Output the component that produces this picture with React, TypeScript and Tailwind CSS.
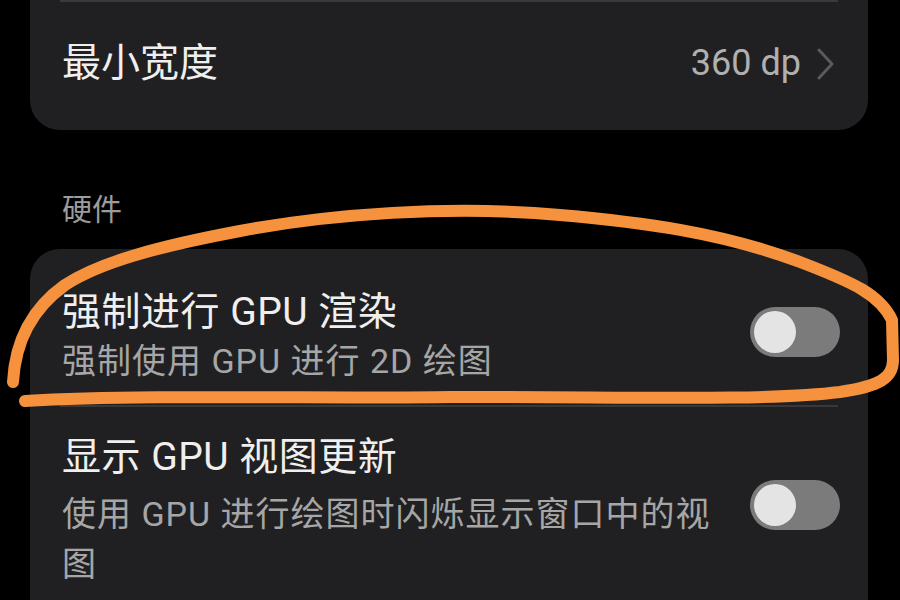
import React from "react";

const FONT = 'Roboto, "Noto Sans CJK SC", "Noto Sans", sans-serif';

function Toggle({ className = "" }: { className?: string }) {
  return (
    <div className={`w-[90px] h-[50px] rounded-full bg-[#7b7b7b] flex items-center pl-[4px] shrink-0 ${className}`}>
      <div className="w-[42px] h-[42px] rounded-full bg-[#e4e4e4]" />
    </div>
  );
}

export default function App() {
  return (
    <div
      className="relative w-[900px] h-[600px] overflow-hidden bg-black"
      style={{ fontFamily: FONT }}
    >
      {/* Card 1 */}
      <div className="ml-[30px] w-[838px] bg-[#202022] rounded-b-[30px]">
        <div className="mx-[30px] h-[2px] bg-[#3a3a3c]" />
        <div className="flex items-center justify-between pl-[32px] pr-[33px] h-[128px] pb-[6px]">
          <span className="text-[39px] leading-[46px] text-[#efefef]">最小宽度</span>
          <div className="flex items-center gap-[16px]">
            <span className="text-[36px] leading-[46px] text-[#b0b0b0]">360 dp</span>
            <svg width="18" height="32" viewBox="0 0 18 32" className="mt-[2px]">
              <polyline
                points="2,2 15,16 2,30"
                fill="none"
                stroke="#5a5a5a"
                strokeWidth="3"
                strokeLinecap="round"
                strokeLinejoin="round"
              />
            </svg>
          </div>
        </div>
      </div>

      {/* Section label */}
      <div className="pl-[62px] mt-[62px] text-[30px] leading-[36px] text-[#9c9c9c]">硬件</div>

      {/* Card 2 */}
      <div className="ml-[30px] mt-[21px] w-[838px] bg-[#202022] rounded-[30px] pb-[40px]">
        <div className="flex items-start justify-between pl-[32px] pr-[28px] pt-[40px] pb-[22px]">
          <div className="flex flex-col">
            <span className="text-[39px] leading-[46px] tracking-[0.5px] text-[#efefef]">强制进行 GPU 渲染</span>
            <span className="mt-[4px] text-[34px] leading-[44px] tracking-[1px] text-[#a6a6a6]">强制使用 GPU 进行 2D 绘图</span>
          </div>
          <Toggle className="mt-[18px]" />
        </div>
        <div className="mx-[30px] h-[2px] bg-[#38383a]" />
        <div className="flex items-start justify-between pl-[32px] pr-[28px] pt-[27px]">
          <div className="flex flex-col">
            <span className="text-[39px] leading-[46px] tracking-[0.5px] text-[#efefef]">显示 GPU 视图更新</span>
            <span className="mt-[9px] text-[34px] leading-[50px] tracking-[1px] text-[#a6a6a6] whitespace-nowrap">
              使用 GPU 进行绘图时闪烁显示窗口中的视
              <br />图
            </span>
          </div>
          <Toggle className="mt-[46px]" />
        </div>
      </div>

      {/* Hand-drawn orange annotation */}
      <svg
        className="absolute left-0 top-0 pointer-events-none"
        width="900"
        height="600"
        viewBox="0 0 900 600"
      >
        <path
          d="M 25 401 C 150 394, 330 399, 450 397 C 600 396, 760 402, 840 392 C 880 386, 893 378, 893 360 L 892 320 C 880 295, 855 283, 800 262 C 720 232, 640 222, 560 215 C 450 205, 330 214, 240 231 C 160 246, 100 262, 65 285 C 30 310, 15 345, 13 382"
          fill="none"
          stroke="#f6913d"
          strokeWidth="12"
          strokeLinecap="round"
          strokeLinejoin="round"
        />
      </svg>
    </div>
  );
}
